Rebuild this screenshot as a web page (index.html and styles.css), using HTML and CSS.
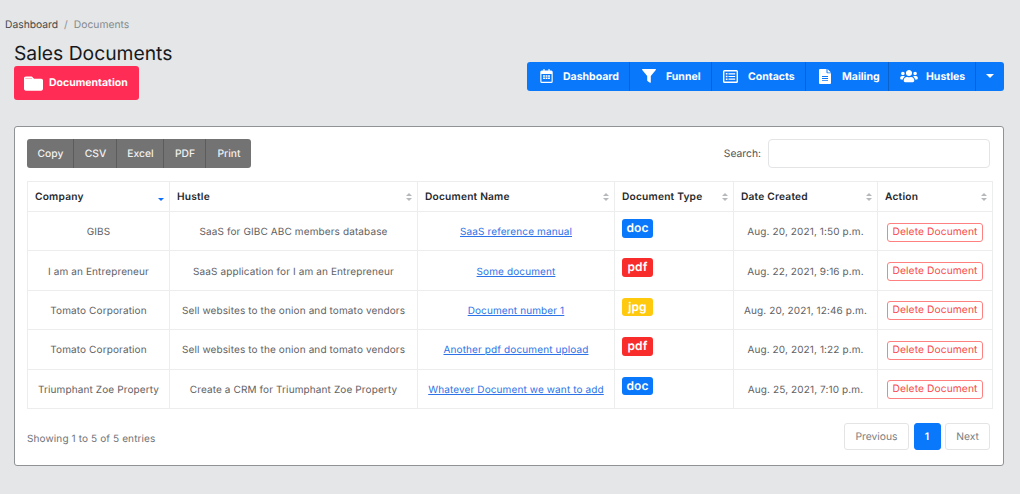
FILE: index.html
```html
<!DOCTYPE html>
<html lang="en">
<head>
<meta charset="utf-8">
<title>Sales Documents</title>
<link rel="stylesheet" href="styles.css">
</head>
<body>
<nav class="crumbs"><a>Dashboard</a><span class="sep">/</span><span class="cur">Documents</span></nav>
<header class="head">
  <div class="head-left">
    <h1>Sales Documents</h1>
    <a class="doc-btn">
      <svg class="folder" viewBox="0 0 512 512"><path fill="#fff" d="M464 128H272l-54.600-54.600C211.400 67.400 203.200 64 194.700 64H48C21.500 64 0 85.500 0 112v288c0 26.500 21.500 48 48 48h416c26.500 0 48-21.500 48-48V176c0-26.500-21.500-48-48-48z"/><path fill="#ff2d55" d="M36 128h180v-9H36z"/></svg>
      <span class="doc-label">Documentation</span>
    </a>
  </div>
  <div class="nav-group">
    <a class="nav-btn n1"><svg class="ni" viewBox="0 0 16 18"><path fill="#fff" fill-rule="evenodd" d="M4 0h1.500v2h5V0H12v2h2a2 2 0 0 1 2 2v12a2 2 0 0 1-2 2H2a2 2 0 0 1-2-2V4a2 2 0 0 1 2-2h2V0zM1.500 6.500V16a.5.500 0 0 0 .5.500h12a.5.500 0 0 0 .5-.500V6.500h-13zM3.500 8h2.500v2H3.500zM6.800 8h2.500v2H6.800zM10 8h2.500v2H10zM3.500 11h2.500v2H3.500zM6.800 11h2.500v2H6.800zM10 11h2.500v2H10z"/></svg>Dashboard</a>
    <a class="nav-btn n2"><svg class="ni nf" viewBox="0 0 14 14"><path fill="#fff" d="M.6 0h12.800c.5 0 .8.600.4 1L8.800 7v6.200c0 .5-.5.800-.9.500L5.500 12a.7.700 0 0 1-.3-.5V7L.2 1C-.2.600.1 0 .6 0z"/></svg>Funnel</a>
    <a class="nav-btn n3"><svg class="ni nc" viewBox="0 0 15 13"><path fill="#fff" fill-rule="evenodd" d="M1.500 0h12A1.500 1.500 0 0 1 15 1.500v10a1.500 1.500 0 0 1-1.500 1.500h-12A1.500 1.500 0 0 1 0 11.500v-10A1.500 1.500 0 0 1 1.500 0zM1.400 1.400v10.200h12.200V1.400H1.400zM2.800 3h1.700v1.600H2.800zM5.500 3.200h6.700v1.200H5.500zM2.800 5.700h1.700v1.600H2.800zM5.500 5.900h6.700v1.200H5.500zM2.800 8.400h1.700V10H2.800zM5.500 8.600h6.700v1.200H5.500z"/></svg>Contacts</a>
    <a class="nav-btn n4"><svg class="ni nd" viewBox="0 0 12 15"><path fill="#fff" fill-rule="evenodd" d="M1 0h6.500v3.500a.8.800 0 0 0 .8.800H12V14a1 1 0 0 1-1 1H1a1 1 0 0 1-1-1V1a1 1 0 0 1 1-1zM8.500 0 12 3.400H8.500V0zM3 7v.9h6V7H3zm0 2.100v.9h6v-.9H3zm0 2.100v.9h6v-.9H3z"/></svg>Mailing</a>
    <a class="nav-btn n5"><svg class="ni nu" viewBox="0 0 640 512"><path fill="#fff" d="M96 224c35.300 0 64-28.700 64-64s-28.700-64-64-64-64 28.700-64 64 28.700 64 64 64zm448 0c35.300 0 64-28.700 64-64s-28.700-64-64-64-64 28.700-64 64 28.700 64 64 64zm32 32h-64c-17.600 0-33.500 7.100-45.100 18.600 40.300 22.100 68.900 62 75.100 109.400h66c17.700 0 32-14.300 32-32v-32c0-35.300-28.700-64-64-64zm-256 0c61.900 0 112-50.100 112-112S381.900 32 320 32 208 82.100 208 144s50.100 112 112 112zm76.800 32h-8.300c-20.800 10-43.900 16-68.500 16s-47.600-6-68.500-16h-8.300C179.600 288 128 339.600 128 403.200V432c0 26.500 21.500 48 48 48h288c26.500 0 48-21.500 48-48v-28.800c0-63.600-51.600-115.200-115.200-115.200zm-223.700-13.400C161.500 263.100 145.600 256 128 256H64c-35.300 0-64 28.700-64 64v32c0 17.700 14.300 32 32 32h65.900c6.300-47.400 34.900-87.300 75.200-109.400z"/></svg>Hustles</a>
    <a class="nav-btn n6"><span class="caret"></span></a>
  </div>
</header>
<main class="card">
  <div class="toolbar">
    <div class="exports">
      <a class="ex">Copy</a><a class="ex">CSV</a><a class="ex">Excel</a><a class="ex">PDF</a><a class="ex">Print</a>
    </div>
    <label class="search">Search:<input class="search-input" type="text"></label>
  </div>
  <table class="docs">
    <colgroup><col class="c1"><col class="c2"><col class="c3"><col class="c4"><col class="c5"><col class="c6"></colgroup>
    <thead>
      <tr>
        <th class="asc">Company</th><th>Hustle</th><th>Document Name</th><th>Document Type</th><th>Date Created</th><th>Action</th>
      </tr>
    </thead>
    <tbody>
      <tr class="r1"><td>GIBS</td><td>SaaS for GIBC ABC members database</td><td><a class="link">SaaS reference manual</a></td><td class="t"><span class="badge doc">doc</span></td><td>Aug. 20, 2021, 1:50 p.m.</td><td><a class="del">Delete Document</a></td></tr>
      <tr><td>I am an Entrepreneur</td><td>SaaS application for I am an Entrepreneur</td><td><a class="link">Some document</a></td><td class="t"><span class="badge pdf">pdf</span></td><td>Aug. 22, 2021, 9:16 p.m.</td><td><a class="del">Delete Document</a></td></tr>
      <tr><td>Tomato Corporation</td><td>Sell websites to the onion and tomato vendors</td><td><a class="link">Document number 1</a></td><td class="t"><span class="badge jpg">jpg</span></td><td>Aug. 20, 2021, 12:46 p.m.</td><td><a class="del">Delete Document</a></td></tr>
      <tr><td>Tomato Corporation</td><td>Sell websites to the onion and tomato vendors</td><td><a class="link">Another pdf document upload</a></td><td class="t"><span class="badge pdf">pdf</span></td><td>Aug. 20, 2021, 1:22 p.m.</td><td><a class="del">Delete Document</a></td></tr>
      <tr><td>Triumphant Zoe Property</td><td>Create a CRM for Triumphant Zoe Property</td><td><a class="link">Whatever Document we want to add</a></td><td class="t"><span class="badge doc">doc</span></td><td>Aug. 25, 2021, 7:10 p.m.</td><td><a class="del">Delete Document</a></td></tr>
    </tbody>
  </table>
  <div class="foot">
    <div class="info">Showing 1 to 5 of 5 entries</div>
    <div class="pager"><a class="pg prev">Previous</a><a class="pg on">1</a><a class="pg next">Next</a></div>
  </div>
</main>
</body>
</html>
```
FILE: styles.css
```css
* { box-sizing: border-box; }
html, body { margin: 0; padding: 0; }
body {
  width: 1020px;
  height: 494px;
  overflow: hidden;
  background: #e4e6e7;
  font-family: Inter, "Liberation Sans", sans-serif;
  color: #212529;
  text-rendering: geometricPrecision;
}
.crumbs {
  height: 18px;
  margin-top: 16px;
  padding-left: 5px;
  font-size: 10.300px;
  line-height: 18px;
  color: #45494c;
}
.sep { margin: 0 6px; color: #8b9095; }
.cur { color: #85898d; }
.head {
  display: flex;
  justify-content: space-between;
  padding: 0 16px 0 14px;
  height: 92px;
}
.head-left { display: flex; flex-direction: column; align-items: flex-start; }
h1 {
  margin: 8px 0 1px;
  font-size: 19.300px;
  font-weight: 400;
  line-height: 23px;
  color: #16191c;
}
.doc-btn {
  display: flex;
  align-items: center;
  width: 125px;
  height: 34px;
  padding-left: 10px;
  gap: 6px;
  background: #ff2d55;
  border-radius: 3px;
  color: #fff;
  font-size: 10.500px;
  font-weight: 700;
}
.doc-label { padding-bottom: 2px; }
.folder { width: 19px; height: 19px; }
.nav-group {
  display: flex;
  flex: none;
  width: 477px;
  height: 29px;
  margin-top: 28px;
  background: #0a78fb;
  border-radius: 3px;
  overflow: hidden;
}
.nav-btn {
  display: flex;
  flex: none;
  align-items: center;
  padding-bottom: 1px;
  color: #fff;
  font-size: 10.500px;
  font-weight: 700;
  border-right: 1px solid #0a62cc;
}
.ni { flex: none; width: 13px; height: 14px; }
.n1 { width: 103px; padding-left: 13px; gap: 10px; }
.n2 { width: 82px; padding-left: 12px; gap: 10px; }
.n2 .nf { width: 14px; height: 14px; }
.n3 { width: 94px; padding-left: 11px; gap: 10px; }
.n3 .nc { width: 15px; height: 13px; }
.n4 { width: 83px; padding-left: 13px; gap: 11px; }
.n4 .nd { width: 12px; height: 15px; }
.n5 { width: 87px; padding-left: 11px; gap: 8px; }
.n5 .nu { width: 18px; height: 14px; }
.n6 { flex: 1; justify-content: center; border-right: 0; }
.caret {
  width: 0; height: 0;
  border-left: 4px solid transparent;
  border-right: 4px solid transparent;
  border-top: 4px solid #fff;
}
.card {
  width: 990px;
  height: 340px;
  margin-left: 14px;
  padding: 12px 13px 0 12px;
  background: #fff;
  border: 1px solid #8f9396;
  border-radius: 3px;
}
.toolbar {
  display: flex;
  justify-content: space-between;
  align-items: center;
  height: 29px;
}
.exports {
  display: flex;
  height: 29px;
  background: #737373;
  border-radius: 3px;
  overflow: hidden;
}
.ex {
  display: flex;
  align-items: center;
  justify-content: center;
  height: 29px;
  padding-left: 1px;
  color: #f1f1f1;
  font-size: 10.300px;
  font-weight: 500;
  border-right: 1px solid #5c5c5c;
}
.ex:nth-child(1) { width: 47px; }
.ex:nth-child(2) { width: 43px; }
.ex:nth-child(3) { width: 47px; }
.ex:nth-child(4) { width: 42px; }
.ex:nth-child(5) { width: 45px; border-right: 0; }
.search {
  display: flex;
  align-items: center;
  gap: 7px;
  font-size: 10.300px;
  color: #4f5357;
}
.search-input {
  width: 222px;
  height: 29px;
  border: 1px solid #e2e4e6;
  border-radius: 4px;
  background: #fff;
}
.docs {
  table-layout: fixed;
  width: 965px;
  margin-top: 13px;
  border-collapse: collapse;
  font-size: 10px;
  color: #5f6265;
}
.c1 { width: 142px; }
.c2 { width: 248px; }
.c3 { width: 197px; }
.c4 { width: 119px; }
.c5 { width: 144px; }
.c6 { width: 115px; }
.docs th, .docs td { border: 1px solid #eceded; }
.docs th {
  position: relative;
  height: 30px;
  padding: 0 7px;
  text-align: left;
  font-size: 10.200px;
  font-weight: 600;
  letter-spacing: .2px;
  color: #26292c;
}
.docs th::before, .docs th::after {
  content: "";
  position: absolute;
  right: 5px;
  width: 0;
  height: 0;
  border-left: 3px solid transparent;
  border-right: 3px solid transparent;
}
.docs th::before { top: 11px; border-bottom: 3px solid #b5b9bc; }
.docs th::after { top: 16px; border-top: 3px solid #b5b9bc; }
.docs th.asc::before { display: none; }
.docs th.asc::after { top: 16px; border-top-color: #0d6efd; }
.docs td {
  height: 39.400px;
  padding: 2px 4px 0;
  text-align: center;
  letter-spacing: .12px;
}
.docs td.t { padding-left: 7px; text-align: left; vertical-align: top; padding-top: 7px; }
.link { color: #2d73e8; text-decoration: underline; }
.badge {
  display: inline-block;
  width: 31px;
  height: 18.500px;
  border-radius: 3px;
  color: #fff;
  font-size: 12px;
  font-weight: 600;
  line-height: 18px;
  text-align: center;
}
.doc { background: #0a78fb; }
.pdf { background: #f92c2c; }
.jpg { background: #ffc90e; }
.del {
  display: inline-block;
  width: 96px;
  height: 19px;
  border: 1px solid #ff8080;
  border-radius: 3px;
  color: #f84a4a;
  font-size: 10.200px;
  line-height: 17px;
}
.foot {
  display: flex;
  justify-content: space-between;
  margin-top: 14px;
}
.info { font-size: 10px; line-height: 33px; color: #6e7276; letter-spacing: .12px; }
.pager { display: flex; gap: 4.500px; }
.pg {
  display: flex;
  align-items: center;
  justify-content: center;
  height: 27px;
  padding-top: 1px;
  border: 1px solid #e2e4e6;
  border-radius: 3px;
  font-size: 10.300px;
  color: #7a7e82;
}
.prev { width: 65px; }
.next { width: 45px; }
.pg.on { width: 27px; background: #0a78fb; border-color: #0a78fb; color: #fff; font-weight: 600; }
```
